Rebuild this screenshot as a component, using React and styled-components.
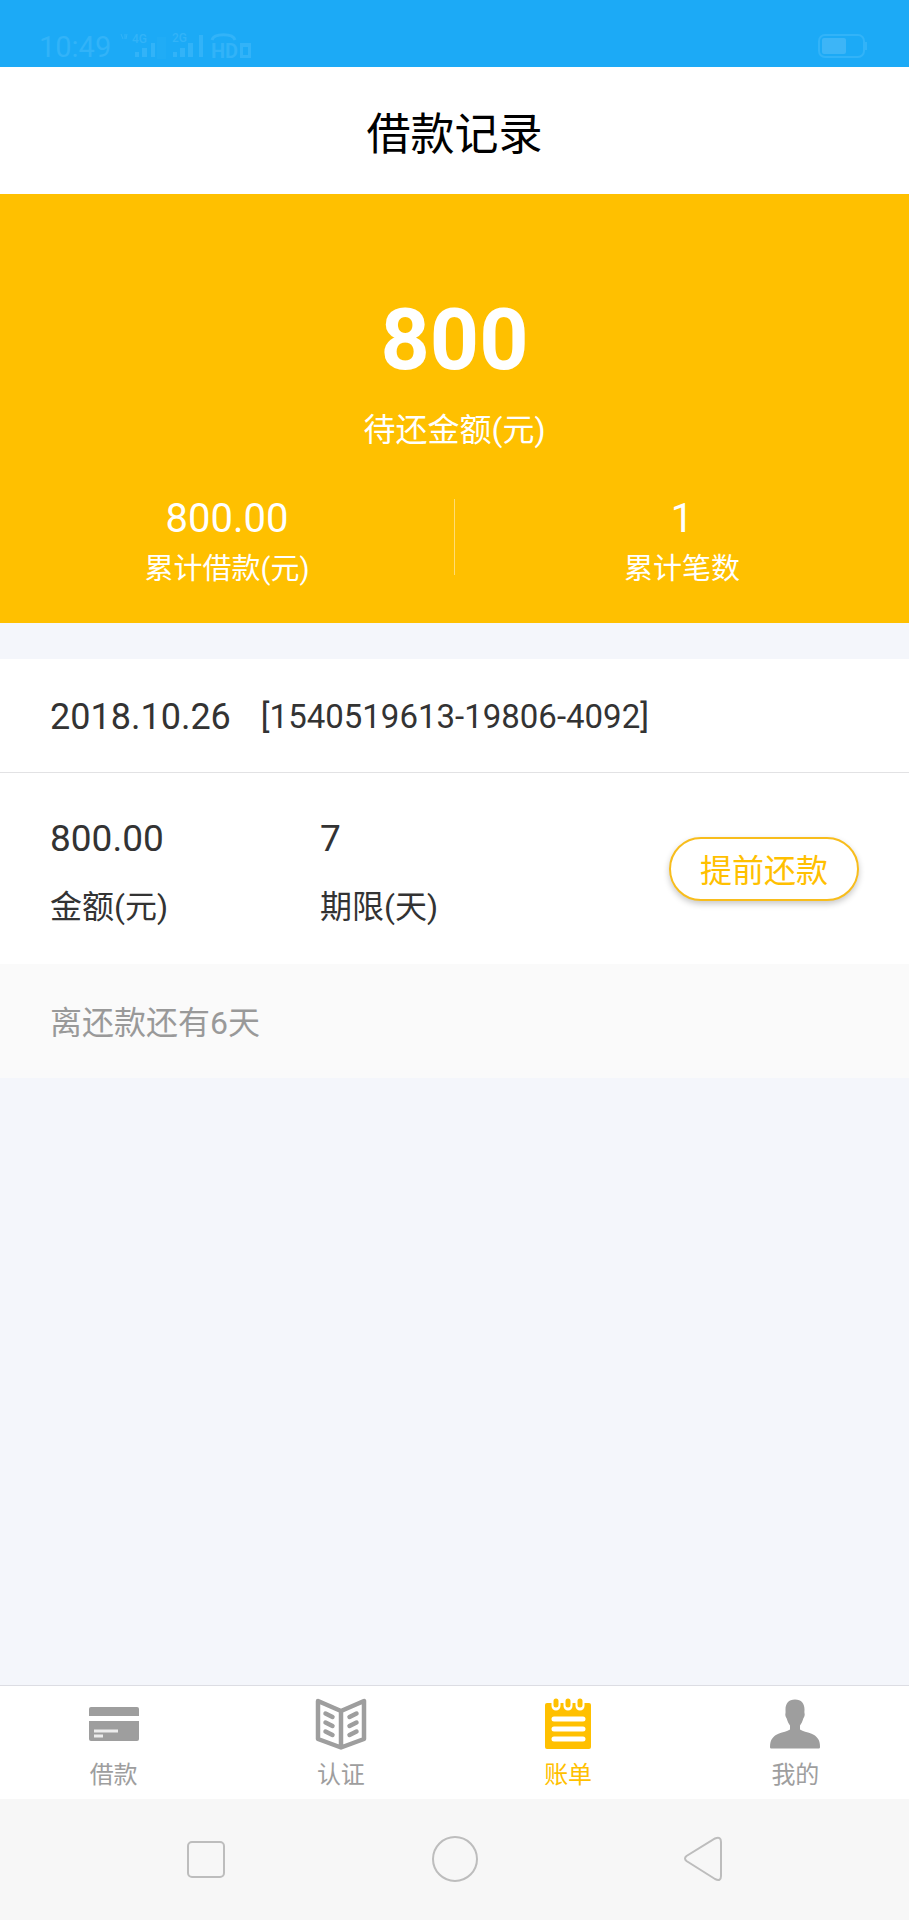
import React from 'react';
import styled, { createGlobalStyle } from 'styled-components';

const GlobalStyle = createGlobalStyle`
  * {
    box-sizing: border-box;
  }

  body {
    margin: 0;
    background-color: #f4f6fb;
    font-family: Roboto, "Noto Sans CJK SC", sans-serif;
    color: #333;
  }

  h1, p, dl, dt, dd {
    margin: 0;
    font-weight: normal;
  }
`;

const Page = styled.div`
  display: flex;
  flex-direction: column;
  min-height: 100vh;
`;

const StatusBar = styled.div`
  display: flex;
  justify-content: space-between;
  align-items: flex-end;
  height: 67px;
  padding: 0 40px 4px 39px;
  background-color: #1caaf6;
  color: #32b3f8;
`;

const StatusGroup = styled.div`
  display: flex;
  align-items: center;
  gap: 8px;
  height: 32px;
`;

const Clock = styled.span`
  font-size: 29px;
  line-height: 32px;
`;

const Header = styled.header`
  display: flex;
  align-items: center;
  justify-content: center;
  height: 127px;
  padding-top: 8px;
  background-color: #fff;
`;

const Title = styled.h1`
  font-size: 44px;
  line-height: 64px;
  color: #000;
`;

const Summary = styled.section`
  padding: 96px 0 32px;
  background-color: #ffc000;
  color: #fff;
  text-align: center;
`;

const Total = styled.p`
  font-size: 86px;
  line-height: 100px;
  font-weight: bold;
`;

const TotalLabel = styled.p`
  margin-top: 18px;
  font-size: 32px;
  line-height: 44px;
`;

const Stats = styled.dl`
  display: grid;
  grid-template-columns: 1fr 1px 1fr;
  margin-top: 43px;
`;

const Stat = styled.div`
  display: flex;
  flex-direction: column-reverse;
  gap: 4px;
`;

const StatLabel = styled.dt`
  font-size: 29px;
  line-height: 44px;
`;

const StatValue = styled.dd`
  font-size: 40px;
  line-height: 48px;
`;

const Divider = styled.div`
  height: 76px;
  margin-top: 4px;
  background-color: #ffdc73;
`;

const Main = styled.main`
  flex: 1;
`;

const Record = styled.article`
  margin-top: 36px;
  background-color: #fff;
`;

const RecordHead = styled.div`
  display: flex;
  align-items: center;
  gap: 30px;
  height: 114px;
  padding: 2px 50px 0;
  border-bottom: 1px solid #e2e2e4;
`;

const RecordDate = styled.time`
  font-size: 36px;
  line-height: 44px;
`;

const RecordNo = styled.span`
  font-size: 33px;
  line-height: 44px;
`;

const RecordBody = styled.div`
  display: flex;
  align-items: center;
  justify-content: space-between;
  height: 191px;
  padding: 0 50px;
`;

const Fields = styled.dl`
  display: grid;
  grid-template-columns: 270px auto;
  padding-top: 8px;
`;

const Field = styled.div`
  display: flex;
  flex-direction: column-reverse;
  gap: 24px;
`;

const FieldLabel = styled.dt`
  font-size: 32px;
  line-height: 44px;
`;

const FieldValue = styled.dd`
  font-size: 37px;
  line-height: 44px;
`;

const RepayButton = styled.button`
  height: 64px;
  padding: 4px 29px 0;
  border: 2px solid #f8bd1c;
  border-radius: 32px;
  background-color: #fff;
  box-shadow: 0 3px 6px rgba(0, 0, 0, 0.22);
  font-family: inherit;
  font-size: 32px;
  line-height: 44px;
  color: #ffc000;
  cursor: pointer;
`;

const RecordFoot = styled.p`
  padding: 37px 50px 33px;
  background-color: #fafafa;
  font-size: 32px;
  line-height: 44px;
  color: #999;
`;

const TabBar = styled.nav`
  display: grid;
  grid-template-columns: repeat(4, 1fr);
  height: 114px;
  border-top: 1px solid #dcdde3;
  background-color: #fff;
`;

const Tab = styled.a`
  display: flex;
  flex-direction: column;
  align-items: center;
  gap: 7px;
  padding-top: 12px;
  font-size: 24px;
  line-height: 36px;
  text-decoration: none;
  color: ${({ $active }) => ($active ? '#ffc000' : '#9e9e9e')};
`;

const SystemBar = styled.div`
  display: grid;
  grid-template-columns: repeat(3, 1fr);
  height: 121px;
  padding: 0 9%;
  background-color: #f7f7f7;
`;

const SystemButton = styled.button`
  display: flex;
  align-items: center;
  justify-content: center;
  padding: 0;
  border: none;
  background: none;
  color: #bdbdbd;
`;

const SignalIcons = () => (
  <svg width="134" height="32" viewBox="0 0 134 32" fill="currentColor" fontFamily="Roboto" fontWeight="500">
    <path d="M2 3l2 5M6 3v5M8 3l-1 5" stroke="currentColor" fill="none" />
    <text x="13" y="12" fontSize="12">4G</text>
    <path d="M16 21h4v5h-4zM23 17h5v9h-5zM32 12h4v14h-4z" />
    <rect x="38" y="6" width="9" height="22" opacity="0.2" />
    <text x="53" y="11" fontSize="12">2G</text>
    <path d="M54 21h4v5h-4zM61 17h5v9h-5zM69 12h5v14h-5zM80 4h4v22h-4z" />
    <path d="M93 9c2-7 21-7 23 0" stroke="currentColor" strokeWidth="3" fill="none" />
    <text x="92" y="27" fontSize="20" fontWeight="700">HD</text>
    <path d="M121 12h11v15h-11zM124 16v8h5v-8z" fillRule="evenodd" />
  </svg>
);

const BatteryIcon = () => (
  <svg width="51" height="32" viewBox="0 0 51 32">
    <rect x="1" y="4" width="45" height="22" rx="6" fill="none" stroke="currentColor" strokeWidth="2" />
    <rect x="4" y="7" width="24" height="16" rx="2" fill="#3db5f7" />
    <path d="M48 11v8" stroke="currentColor" strokeWidth="2" />
  </svg>
);

const CardIcon = () => (
  <svg width="52" height="52" viewBox="0 0 52 52" fill="currentColor">
    <path d="M3 9h46q2 0 2 2v7H1v-7q0-2 2-2z" />
    <path d="M1 23h50v18q0 2-2 2H3q-2 0-2-2z" />
    <path d="M6 33h24M6 38h9" stroke="#ececec" strokeWidth="3" />
  </svg>
);

const BookIcon = () => (
  <svg width="52" height="52" viewBox="0 0 52 52" fill="none" stroke="currentColor" strokeLinejoin="round" strokeLinecap="round">
    <path d="M3 3l23 10L49 3v38L26 49.500L3 41zM26 13v36" strokeWidth="4.500" />
    <path d="M10.500 15.500l7 3.500M10.500 24.500l7 3.500M10.500 33.500l7 3.500M41.500 15.500l-7 3.500M41.500 24.500l-7 3.500M41.500 33.500l-7 3.500" strokeWidth="4.500" />
  </svg>
);

const BillIcon = () => (
  <svg width="52" height="52" viewBox="0 0 52 52">
    <rect x="3" y="5" width="46" height="46" rx="2" fill="currentColor" />
    <path d="M14 3v5M26 3v5M38 3v5" stroke="#fff" strokeWidth="9" strokeLinecap="round" />
    <path d="M14 3v4M26 3v4M38 3v4" stroke="currentColor" strokeWidth="5" strokeLinecap="round" />
    <path d="M12 21h29M12 31h29M12 41h29" stroke="#fff" strokeWidth="5" strokeLinecap="round" />
  </svg>
);

const UserIcon = () => (
  <svg width="52" height="52" viewBox="0 0 52 52" fill="currentColor">
    <path d="M26 1.500c6.500 0 9.500 4 9.500 10 0 1.500-.2 2.500 0 3.500.6 2-.2 4-1.200 5.500-.8 3-2 5-3.300 7v4c3 2 7 2.500 11 4 6 2.500 9 6 9 13.500 0 1-.7 1.500-1.500 1.500h-47c-.8 0-1.500-.5-1.500-1.500 0-7.500 3-11 9-13.500 4-1.500 8-2 11-4v-4c-1.300-2-2.500-4-3.300-7-1-1.500-1.800-3.500-1.200-5.500.2-1 0-2 0-3.500 0-6 3-10 9.500-10z" />
  </svg>
);

const RecentIcon = () => (
  <svg width="38" height="48" viewBox="0 0 38 48" fill="none" stroke="currentColor" strokeWidth="2">
    <rect x="1" y="6" width="36" height="35" rx="4" />
  </svg>
);

const HomeIcon = () => (
  <svg width="48" height="48" viewBox="0 0 48 48" fill="none" stroke="currentColor" strokeWidth="2">
    <circle cx="24" cy="23" r="22" />
  </svg>
);

const BackIcon = () => (
  <svg width="38" height="48" viewBox="0 0 38 48" fill="none" stroke="currentColor" strokeWidth="2">
    <path d="M31 2.500Q37 0 37 6v34q0 6-6 3L2.500 25q-3-2.500 0-5z" />
  </svg>
);

const tabs = [
  { label: '借款', Icon: CardIcon },
  { label: '认证', Icon: BookIcon },
  { label: '账单', Icon: BillIcon, active: true },
  { label: '我的', Icon: UserIcon },
];

const App = () => {
  return (
    <Page>
      <GlobalStyle />
      <StatusBar>
        <StatusGroup>
          <Clock>10:49</Clock>
          <SignalIcons />
        </StatusGroup>
        <StatusGroup>
          <BatteryIcon />
        </StatusGroup>
      </StatusBar>
      <Header>
        <Title>借款记录</Title>
      </Header>
      <Main>
        <Summary>
          <Total>800</Total>
          <TotalLabel>待还金额(元)</TotalLabel>
          <Stats>
            <Stat>
              <StatLabel>累计借款(元)</StatLabel>
              <StatValue>800.00</StatValue>
            </Stat>
            <Divider />
            <Stat>
              <StatLabel>累计笔数</StatLabel>
              <StatValue>1</StatValue>
            </Stat>
          </Stats>
        </Summary>
        <Record>
          <RecordHead>
            <RecordDate>2018.10.26</RecordDate>
            <RecordNo>[1540519613-19806-4092]</RecordNo>
          </RecordHead>
          <RecordBody>
            <Fields>
              <Field>
                <FieldLabel>金额(元)</FieldLabel>
                <FieldValue>800.00</FieldValue>
              </Field>
              <Field>
                <FieldLabel>期限(天)</FieldLabel>
                <FieldValue>7</FieldValue>
              </Field>
            </Fields>
            <RepayButton type="button">提前还款</RepayButton>
          </RecordBody>
          <RecordFoot>离还款还有6天</RecordFoot>
        </Record>
      </Main>
      <TabBar>
        {tabs.map(({ label, Icon, active }) => (
          <Tab key={label} href="#" $active={active} aria-current={active ? 'page' : undefined}>
            <Icon />
            {label}
          </Tab>
        ))}
      </TabBar>
      <SystemBar>
        <SystemButton type="button" aria-label="最近任务"><RecentIcon /></SystemButton>
        <SystemButton type="button" aria-label="主屏幕"><HomeIcon /></SystemButton>
        <SystemButton type="button" aria-label="返回"><BackIcon /></SystemButton>
      </SystemBar>
    </Page>
  );
};

export default App;
